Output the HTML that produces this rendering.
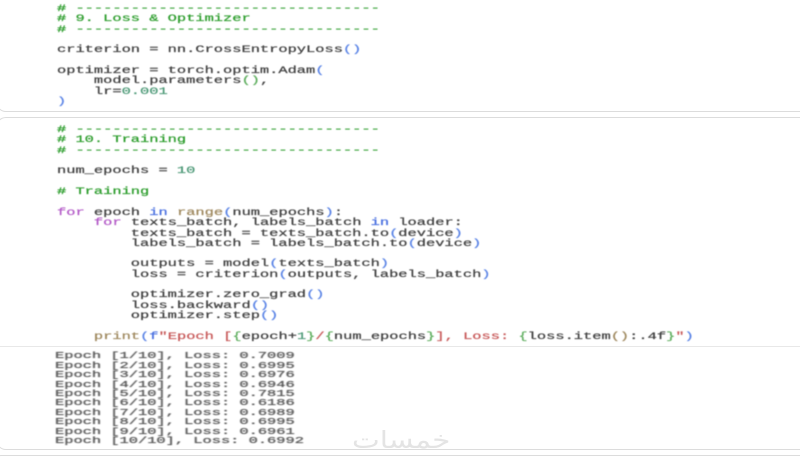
<!DOCTYPE html>
<html><head><meta charset="utf-8"><style>
html,body{margin:0;padding:0;background:#fff;width:800px;height:460px;overflow:hidden}
#w{position:relative;width:800px;height:460px;overflow:hidden;background:#fff}
.box{position:absolute;left:-4px;width:804px;border:1px solid #dcdcdc;border-right:none;box-sizing:border-box;border-radius:10px 0 0 10px;filter:blur(.3px)}
.hr{position:absolute;left:0;width:800px;height:1px;background:#e8e8e8}
pre{position:absolute;margin:2px 0 0;font:400 10px/11px "Liberation Mono",monospace;transform-origin:0 50%;transform:scaleX(1.537);color:#444;filter:blur(.4px);white-space:pre;height:11px;-webkit-text-stroke:.25px currentColor}
.g{color:#2f9e2f}.n{color:#4e9a78}.b{color:#5c85e6}.p{color:#b45cc8}.k{color:#4a70e0}.y{color:#a08a60}.r{color:#c85a5a}.l{color:#5fae5f}
pre.o{color:#555;font-size:9px;transform:scaleX(1.707);margin-top:1px}
.wm{position:absolute;left:352px;top:425px;font:400 24px/30px "DejaVu Sans","Noto Sans CJK SC",sans-serif;color:#e4e4e4;transform-origin:0 50%;transform:scaleX(1.23);white-space:nowrap}
</style></head><body><div id="w">
<div class="box" style="top:0;height:112px;border-top:none;border-top-left-radius:0"></div>
<div class="box" style="top:117px;height:333px"></div>
<div class="box" style="top:455px;height:5px;border-bottom:none;border-bottom-left-radius:0"></div>
<div class="hr" style="top:346px"></div>
<pre class="g" style="left:57px;top:2px"># ---------------------------------</pre>
<pre class="g" style="left:57px;top:12px"># 9. Loss &amp; Optimizer</pre>
<pre class="g" style="left:57px;top:23px"># ---------------------------------</pre>
<pre style="left:57px;top:43px">criterion = nn.CrossEntropyLoss<span class="b">()</span></pre>
<pre style="left:57px;top:64px">optimizer = torch.optim.Adam<span class="b">(</span></pre>
<pre style="left:57px;top:74px">    model.parameters<span class="l">()</span>,</pre>
<pre style="left:57px;top:85px">    lr=<span class="n">0.001</span></pre>
<pre class="b" style="left:57px;top:95px">)</pre>
<pre class="g" style="left:57px;top:123px"># ---------------------------------</pre>
<pre class="g" style="left:57px;top:133px"># 10. Training</pre>
<pre class="g" style="left:57px;top:144px"># ---------------------------------</pre>
<pre style="left:57px;top:164px">num_epochs = <span class="n">10</span></pre>
<pre class="g" style="left:57px;top:185px"># Training</pre>
<pre style="left:57px;top:206px"><span class="p">for</span> epoch <span class="k">in</span> <span class="y">range</span><span class="b">(</span>num_epochs<span class="b">)</span>:</pre>
<pre style="left:57px;top:216px">    <span class="p">for</span> texts_batch, labels_batch <span class="k">in</span> loader:</pre>
<pre style="left:57px;top:227px">        texts_batch = texts_batch.to<span class="b">(</span>device<span class="b">)</span></pre>
<pre style="left:57px;top:237px">        labels_batch = labels_batch.to<span class="b">(</span>device<span class="b">)</span></pre>
<pre style="left:57px;top:257px">        outputs = model<span class="b">(</span>texts_batch<span class="b">)</span></pre>
<pre style="left:57px;top:268px">        loss = criterion<span class="b">(</span>outputs, labels_batch<span class="b">)</span></pre>
<pre style="left:57px;top:288px">        optimizer.zero_grad<span class="b">()</span></pre>
<pre style="left:57px;top:299px">        loss.backward<span class="b">()</span></pre>
<pre style="left:57px;top:309px">        optimizer.step<span class="b">()</span></pre>
<pre style="left:57px;top:330px">    <span class="y">print</span><span class="b">(</span><span class="k">f</span><span class="r">"Epoch [</span><span class="l">{</span>epoch+<span class="n">1</span><span class="l">}</span><span class="r">/</span><span class="l">{</span>num_epochs<span class="l">}</span><span class="r">], Loss: </span><span class="l">{</span>loss.item<span class="y">()</span>:.4f<span class="l">}</span><span class="r">"</span><span class="b">)</span></pre>
<pre class="o" style="left:55px;top:350px">Epoch [1/10], Loss: 0.7009</pre>
<pre class="o" style="left:55px;top:359.5px">Epoch [2/10], Loss: 0.6995</pre>
<pre class="o" style="left:55px;top:369px">Epoch [3/10], Loss: 0.6976</pre>
<pre class="o" style="left:55px;top:378.5px">Epoch [4/10], Loss: 0.6946</pre>
<pre class="o" style="left:55px;top:388px">Epoch [5/10], Loss: 0.7815</pre>
<pre class="o" style="left:55px;top:397px">Epoch [6/10], Loss: 0.6186</pre>
<pre class="o" style="left:55px;top:406.5px">Epoch [7/10], Loss: 0.6989</pre>
<pre class="o" style="left:55px;top:416px">Epoch [8/10], Loss: 0.6995</pre>
<pre class="o" style="left:55px;top:425.5px">Epoch [9/10], Loss: 0.6961</pre>
<pre class="o" style="left:55px;top:435px">Epoch [10/10], Loss: 0.6992</pre>
<div class="wm">خمسات</div>
</div></body></html>
